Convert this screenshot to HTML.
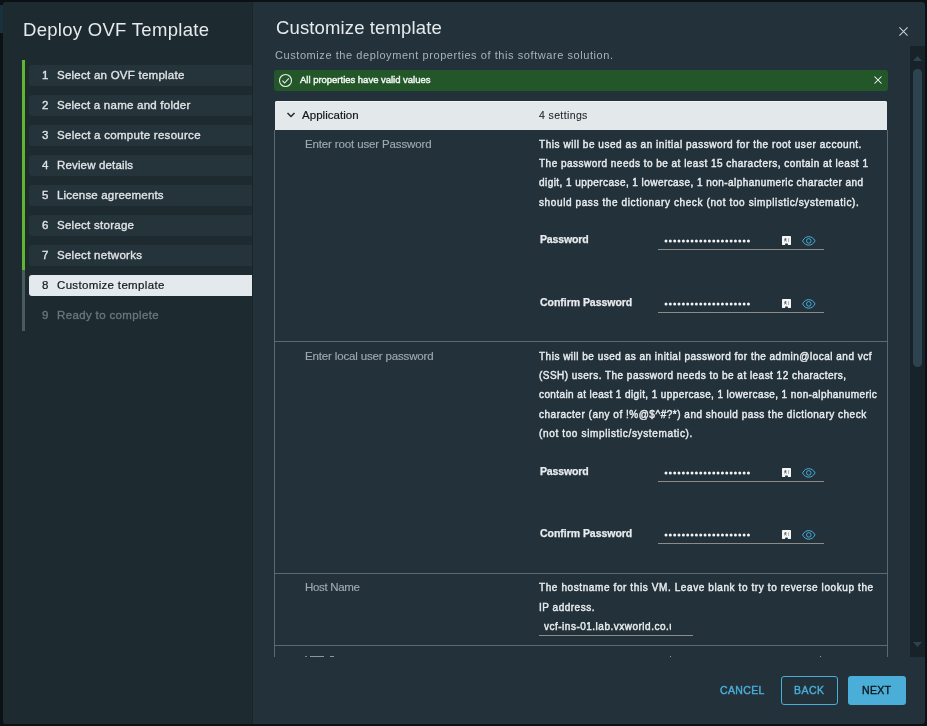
<!DOCTYPE html><html><head><meta charset="utf-8"><style>
html,body{margin:0;padding:0;width:927px;height:726px;overflow:hidden;background:#0b1114;}
.t{position:absolute;white-space:nowrap;line-height:1;font-family:"Liberation Sans", sans-serif;will-change:transform;}
.b{position:absolute;}
</style></head><body>
<div class="b" style="left:0;top:5px;width:3px;height:28px;background:#17323e"></div>
<div class="b" style="left:3px;top:2px;width:922px;height:722px;background:#22313a;border-radius:3px;overflow:hidden">
<div class="b" style="left:0;top:0;width:249px;height:722px;background:#1d2a30"></div><div class="b" style="left:249px;top:0;width:1px;height:722px;background:#1a2429"></div>
</div>
<div class="b" style="left:22px;top:60px;width:3px;height:210px;background:#62b531"></div><div class="b" style="left:22px;top:270px;width:3px;height:61px;background:#4b5960"></div><div class="b" style="left:29px;top:65px;width:223px;height:21px;background:#25333a;border-radius:3px 0 0 3px"></div><div class="b" style="left:29px;top:95px;width:223px;height:21px;background:#25333a;border-radius:3px 0 0 3px"></div><div class="b" style="left:29px;top:125px;width:223px;height:21px;background:#25333a;border-radius:3px 0 0 3px"></div><div class="b" style="left:29px;top:155px;width:223px;height:21px;background:#25333a;border-radius:3px 0 0 3px"></div><div class="b" style="left:29px;top:185px;width:223px;height:21px;background:#25333a;border-radius:3px 0 0 3px"></div><div class="b" style="left:29px;top:215px;width:223px;height:21px;background:#25333a;border-radius:3px 0 0 3px"></div><div class="b" style="left:29px;top:245px;width:223px;height:21px;background:#25333a;border-radius:3px 0 0 3px"></div><div class="b" style="left:29px;top:275px;width:223px;height:21px;background:#e3e9ec;border-radius:3px 0 0 3px"></div><svg class="b" style="left:895px;top:23px" width="17" height="17" viewBox="0 0 17 17"><path d="M4.4 4.4 L12.6 12.6 M12.6 4.4 L4.4 12.6" stroke="#c8d2d6" stroke-width="1.05" fill="none"/></svg><div class="b" style="left:274px;top:70px;width:614px;height:21px;background:#23572a;border-radius:3px"></div><svg class="b" style="left:277px;top:72px" width="17" height="17" viewBox="0 0 17 17"><circle cx="8.5" cy="8.5" r="6" stroke="#e8eee8" stroke-width="1.1" fill="none"/><path d="M5.4 8.7 L7.6 11 L11.8 6.3" stroke="#e8eee8" stroke-width="1.1" fill="none"/></svg><svg class="b" style="left:870px;top:72px" width="16" height="16" viewBox="0 0 16 16"><path d="M4.5 4.5 L11.5 11.5 M11.5 4.5 L4.5 11.5" stroke="#ffffff" stroke-width="1.05" fill="none"/></svg><div class="b" style="left:910px;top:46px;width:15px;height:611px;background:#172329"></div><div class="b" style="left:913px;top:69px;width:9px;height:298px;background:#2d4350;border-radius:5px"></div><svg class="b" style="left:910px;top:50px" width="15" height="15" viewBox="0 0 15 15"><path d="M3 11 L7.5 6 L12 11 Z" fill="#2d4350"/></svg><svg class="b" style="left:910px;top:638px" width="15" height="15" viewBox="0 0 15 15"><path d="M3 4 L7.5 9 L12 4 Z" fill="#2d4350"/></svg><div class="b" style="left:274px;top:101px;width:614px;height:556px;overflow:hidden"><div class="b" style="left:1px;top:0;width:612px;height:29px;background:#e3e8eb;border-radius:2px 2px 0 0;box-shadow:inset 0 1px 0 #eef2f4"></div><div class="b" style="left:0;top:29px;width:1px;height:600px;background:#5a6a72"></div><div class="b" style="left:613px;top:29px;width:1px;height:600px;background:#5a6a72"></div><div class="b" style="left:0;top:240px;width:614px;height:1px;background:#5a6a72"></div><div class="b" style="left:0;top:472px;width:614px;height:1px;background:#5a6a72"></div><div class="b" style="left:0;top:544px;width:614px;height:1px;background:#5a6a72"></div><div class="b" style="left:31px;top:555px;width:2px;height:1px;background:#7d888e"></div><div class="b" style="left:36px;top:555px;width:14px;height:1px;background:#8d989e"></div><div class="b" style="left:56px;top:555px;width:4px;height:1px;background:#8d989e"></div><div class="b" style="left:396px;top:555px;width:1px;height:1px;background:#9aa2a6"></div><div class="b" style="left:546px;top:555px;width:1px;height:1px;background:#9aa2a6"></div></div><svg class="b" style="left:285px;top:109px" width="12" height="12" viewBox="0 0 12 12"><path d="M2.5 4 L6 7.5 L9.5 4" stroke="#1b2a32" stroke-width="1.5" fill="none"/></svg><svg class="b" style="left:663.5px;top:237.5px" width="90" height="6" viewBox="0 0 90 6"><circle cx="2.00" cy="3" r="1.5" fill="#f2f4f5"/><circle cx="6.34" cy="3" r="1.5" fill="#f2f4f5"/><circle cx="10.68" cy="3" r="1.5" fill="#f2f4f5"/><circle cx="15.02" cy="3" r="1.5" fill="#f2f4f5"/><circle cx="19.36" cy="3" r="1.5" fill="#f2f4f5"/><circle cx="23.70" cy="3" r="1.5" fill="#f2f4f5"/><circle cx="28.04" cy="3" r="1.5" fill="#f2f4f5"/><circle cx="32.38" cy="3" r="1.5" fill="#f2f4f5"/><circle cx="36.72" cy="3" r="1.5" fill="#f2f4f5"/><circle cx="41.06" cy="3" r="1.5" fill="#f2f4f5"/><circle cx="45.40" cy="3" r="1.5" fill="#f2f4f5"/><circle cx="49.74" cy="3" r="1.5" fill="#f2f4f5"/><circle cx="54.08" cy="3" r="1.5" fill="#f2f4f5"/><circle cx="58.42" cy="3" r="1.5" fill="#f2f4f5"/><circle cx="62.76" cy="3" r="1.5" fill="#f2f4f5"/><circle cx="67.10" cy="3" r="1.5" fill="#f2f4f5"/><circle cx="71.44" cy="3" r="1.5" fill="#f2f4f5"/><circle cx="75.78" cy="3" r="1.5" fill="#f2f4f5"/><circle cx="80.12" cy="3" r="1.5" fill="#f2f4f5"/><circle cx="84.46" cy="3" r="1.5" fill="#f2f4f5"/></svg><div class="b" style="left:658px;top:249px;width:166px;height:1px;background:#8e8a86"></div><svg class="b" style="left:782px;top:236px" width="9" height="9" viewBox="0 0 9 9"><path d="M0 0.8 Q0 0 0.8 0 H8.2 Q9 0 9 0.8 V8.6 Q9 9 8.6 9 H6 L5.6 7.4 H3.4 L3 9 H0.4 Q0 9 0 8.6 Z" fill="#f6f6f6"/><path d="M2.2 3 L4.6 5.2 M4.6 3 L2.2 5.2 M3.4 2 V4.2" stroke="#5f6a70" stroke-width="1"/><path d="M6.6 2.2 V6" stroke="#a0a8ad" stroke-width="0.9"/></svg><svg class="b" style="left:801.5px;top:235.5px" width="14" height="10" viewBox="0 0 14 10"><path d="M0.6 4.9 C3.2 -0.8, 10.3 -0.8, 13 4.9 C10.3 10.6, 3.2 10.6, 0.6 4.9 Z" stroke="#4aaed9" stroke-width="1" fill="none"/><circle cx="6.8" cy="4.9" r="2.3" stroke="#4aaed9" stroke-width="0.95" fill="none"/></svg><svg class="b" style="left:663.5px;top:300.5px" width="90" height="6" viewBox="0 0 90 6"><circle cx="2.00" cy="3" r="1.5" fill="#f2f4f5"/><circle cx="6.34" cy="3" r="1.5" fill="#f2f4f5"/><circle cx="10.68" cy="3" r="1.5" fill="#f2f4f5"/><circle cx="15.02" cy="3" r="1.5" fill="#f2f4f5"/><circle cx="19.36" cy="3" r="1.5" fill="#f2f4f5"/><circle cx="23.70" cy="3" r="1.5" fill="#f2f4f5"/><circle cx="28.04" cy="3" r="1.5" fill="#f2f4f5"/><circle cx="32.38" cy="3" r="1.5" fill="#f2f4f5"/><circle cx="36.72" cy="3" r="1.5" fill="#f2f4f5"/><circle cx="41.06" cy="3" r="1.5" fill="#f2f4f5"/><circle cx="45.40" cy="3" r="1.5" fill="#f2f4f5"/><circle cx="49.74" cy="3" r="1.5" fill="#f2f4f5"/><circle cx="54.08" cy="3" r="1.5" fill="#f2f4f5"/><circle cx="58.42" cy="3" r="1.5" fill="#f2f4f5"/><circle cx="62.76" cy="3" r="1.5" fill="#f2f4f5"/><circle cx="67.10" cy="3" r="1.5" fill="#f2f4f5"/><circle cx="71.44" cy="3" r="1.5" fill="#f2f4f5"/><circle cx="75.78" cy="3" r="1.5" fill="#f2f4f5"/><circle cx="80.12" cy="3" r="1.5" fill="#f2f4f5"/><circle cx="84.46" cy="3" r="1.5" fill="#f2f4f5"/></svg><div class="b" style="left:658px;top:312px;width:166px;height:1px;background:#8e8a86"></div><svg class="b" style="left:782px;top:299px" width="9" height="9" viewBox="0 0 9 9"><path d="M0 0.8 Q0 0 0.8 0 H8.2 Q9 0 9 0.8 V8.6 Q9 9 8.6 9 H6 L5.6 7.4 H3.4 L3 9 H0.4 Q0 9 0 8.6 Z" fill="#f6f6f6"/><path d="M2.2 3 L4.6 5.2 M4.6 3 L2.2 5.2 M3.4 2 V4.2" stroke="#5f6a70" stroke-width="1"/><path d="M6.6 2.2 V6" stroke="#a0a8ad" stroke-width="0.9"/></svg><svg class="b" style="left:801.5px;top:298.5px" width="14" height="10" viewBox="0 0 14 10"><path d="M0.6 4.9 C3.2 -0.8, 10.3 -0.8, 13 4.9 C10.3 10.6, 3.2 10.6, 0.6 4.9 Z" stroke="#4aaed9" stroke-width="1" fill="none"/><circle cx="6.8" cy="4.9" r="2.3" stroke="#4aaed9" stroke-width="0.95" fill="none"/></svg><svg class="b" style="left:663.5px;top:469.5px" width="90" height="6" viewBox="0 0 90 6"><circle cx="2.00" cy="3" r="1.5" fill="#f2f4f5"/><circle cx="6.34" cy="3" r="1.5" fill="#f2f4f5"/><circle cx="10.68" cy="3" r="1.5" fill="#f2f4f5"/><circle cx="15.02" cy="3" r="1.5" fill="#f2f4f5"/><circle cx="19.36" cy="3" r="1.5" fill="#f2f4f5"/><circle cx="23.70" cy="3" r="1.5" fill="#f2f4f5"/><circle cx="28.04" cy="3" r="1.5" fill="#f2f4f5"/><circle cx="32.38" cy="3" r="1.5" fill="#f2f4f5"/><circle cx="36.72" cy="3" r="1.5" fill="#f2f4f5"/><circle cx="41.06" cy="3" r="1.5" fill="#f2f4f5"/><circle cx="45.40" cy="3" r="1.5" fill="#f2f4f5"/><circle cx="49.74" cy="3" r="1.5" fill="#f2f4f5"/><circle cx="54.08" cy="3" r="1.5" fill="#f2f4f5"/><circle cx="58.42" cy="3" r="1.5" fill="#f2f4f5"/><circle cx="62.76" cy="3" r="1.5" fill="#f2f4f5"/><circle cx="67.10" cy="3" r="1.5" fill="#f2f4f5"/><circle cx="71.44" cy="3" r="1.5" fill="#f2f4f5"/><circle cx="75.78" cy="3" r="1.5" fill="#f2f4f5"/><circle cx="80.12" cy="3" r="1.5" fill="#f2f4f5"/><circle cx="84.46" cy="3" r="1.5" fill="#f2f4f5"/></svg><div class="b" style="left:658px;top:481px;width:166px;height:1px;background:#8e8a86"></div><svg class="b" style="left:782px;top:468px" width="9" height="9" viewBox="0 0 9 9"><path d="M0 0.8 Q0 0 0.8 0 H8.2 Q9 0 9 0.8 V8.6 Q9 9 8.6 9 H6 L5.6 7.4 H3.4 L3 9 H0.4 Q0 9 0 8.6 Z" fill="#f6f6f6"/><path d="M2.2 3 L4.6 5.2 M4.6 3 L2.2 5.2 M3.4 2 V4.2" stroke="#5f6a70" stroke-width="1"/><path d="M6.6 2.2 V6" stroke="#a0a8ad" stroke-width="0.9"/></svg><svg class="b" style="left:801.5px;top:467.5px" width="14" height="10" viewBox="0 0 14 10"><path d="M0.6 4.9 C3.2 -0.8, 10.3 -0.8, 13 4.9 C10.3 10.6, 3.2 10.6, 0.6 4.9 Z" stroke="#4aaed9" stroke-width="1" fill="none"/><circle cx="6.8" cy="4.9" r="2.3" stroke="#4aaed9" stroke-width="0.95" fill="none"/></svg><svg class="b" style="left:663.5px;top:531.5px" width="90" height="6" viewBox="0 0 90 6"><circle cx="2.00" cy="3" r="1.5" fill="#f2f4f5"/><circle cx="6.34" cy="3" r="1.5" fill="#f2f4f5"/><circle cx="10.68" cy="3" r="1.5" fill="#f2f4f5"/><circle cx="15.02" cy="3" r="1.5" fill="#f2f4f5"/><circle cx="19.36" cy="3" r="1.5" fill="#f2f4f5"/><circle cx="23.70" cy="3" r="1.5" fill="#f2f4f5"/><circle cx="28.04" cy="3" r="1.5" fill="#f2f4f5"/><circle cx="32.38" cy="3" r="1.5" fill="#f2f4f5"/><circle cx="36.72" cy="3" r="1.5" fill="#f2f4f5"/><circle cx="41.06" cy="3" r="1.5" fill="#f2f4f5"/><circle cx="45.40" cy="3" r="1.5" fill="#f2f4f5"/><circle cx="49.74" cy="3" r="1.5" fill="#f2f4f5"/><circle cx="54.08" cy="3" r="1.5" fill="#f2f4f5"/><circle cx="58.42" cy="3" r="1.5" fill="#f2f4f5"/><circle cx="62.76" cy="3" r="1.5" fill="#f2f4f5"/><circle cx="67.10" cy="3" r="1.5" fill="#f2f4f5"/><circle cx="71.44" cy="3" r="1.5" fill="#f2f4f5"/><circle cx="75.78" cy="3" r="1.5" fill="#f2f4f5"/><circle cx="80.12" cy="3" r="1.5" fill="#f2f4f5"/><circle cx="84.46" cy="3" r="1.5" fill="#f2f4f5"/></svg><div class="b" style="left:658px;top:543px;width:166px;height:1px;background:#8e8a86"></div><svg class="b" style="left:782px;top:530px" width="9" height="9" viewBox="0 0 9 9"><path d="M0 0.8 Q0 0 0.8 0 H8.2 Q9 0 9 0.8 V8.6 Q9 9 8.6 9 H6 L5.6 7.4 H3.4 L3 9 H0.4 Q0 9 0 8.6 Z" fill="#f6f6f6"/><path d="M2.2 3 L4.6 5.2 M4.6 3 L2.2 5.2 M3.4 2 V4.2" stroke="#5f6a70" stroke-width="1"/><path d="M6.6 2.2 V6" stroke="#a0a8ad" stroke-width="0.9"/></svg><svg class="b" style="left:801.5px;top:529.5px" width="14" height="10" viewBox="0 0 14 10"><path d="M0.6 4.9 C3.2 -0.8, 10.3 -0.8, 13 4.9 C10.3 10.6, 3.2 10.6, 0.6 4.9 Z" stroke="#4aaed9" stroke-width="1" fill="none"/><circle cx="6.8" cy="4.9" r="2.3" stroke="#4aaed9" stroke-width="0.95" fill="none"/></svg><div class="b" style="left:539px;top:635px;width:154px;height:1px;background:#8e8a86"></div><div class="b" style="left:781px;top:676px;width:55px;height:27px;border:1px solid #4aaed9;border-radius:3px"></div><div class="b" style="left:848px;top:676px;width:58px;height:29px;background:#4aaed9;border-radius:3px"></div><div class="t" style="left:22.80px;top:21.00px;font-size:18.5px;color:#e6eaec;font-weight:normal;letter-spacing:0.296px;">Deploy OVF Template</div>
<div class="t" style="left:276.00px;top:19.00px;font-size:18.5px;color:#e6eaec;font-weight:normal;letter-spacing:0.130px;">Customize template</div>
<div class="t" style="left:275.00px;top:50.00px;font-size:11px;color:#a8b3b9;font-weight:normal;letter-spacing:0.570px;">Customize the deployment properties of this software solution.</div>
<div class="t" style="left:299.93px;top:75.00px;font-size:9.5px;color:#f0f4f0;font-weight:normal;letter-spacing:-0.015px;-webkit-text-stroke:0.45px #f0f4f0;">All properties have valid values</div>
<div class="t" style="left:42.38px;top:70.00px;font-size:11.5px;color:#dfe4e7;font-weight:normal;letter-spacing:0.000px;-webkit-text-stroke:0.35px #dfe4e7;">1</div>
<div class="t" style="left:57.07px;top:70.00px;font-size:11.5px;color:#dfe4e7;font-weight:normal;letter-spacing:0.250px;-webkit-text-stroke:0.35px #dfe4e7;">Select an OVF template</div>
<div class="t" style="left:42.38px;top:100.00px;font-size:11.5px;color:#dfe4e7;font-weight:normal;letter-spacing:0.000px;-webkit-text-stroke:0.35px #dfe4e7;">2</div>
<div class="t" style="left:57.07px;top:100.00px;font-size:11.5px;color:#dfe4e7;font-weight:normal;letter-spacing:0.236px;-webkit-text-stroke:0.35px #dfe4e7;">Select a name and folder</div>
<div class="t" style="left:42.38px;top:130.00px;font-size:11.5px;color:#dfe4e7;font-weight:normal;letter-spacing:0.000px;-webkit-text-stroke:0.35px #dfe4e7;">3</div>
<div class="t" style="left:57.07px;top:130.00px;font-size:11.5px;color:#dfe4e7;font-weight:normal;letter-spacing:0.281px;-webkit-text-stroke:0.35px #dfe4e7;">Select a compute resource</div>
<div class="t" style="left:42.38px;top:160.00px;font-size:11.5px;color:#dfe4e7;font-weight:normal;letter-spacing:0.000px;-webkit-text-stroke:0.35px #dfe4e7;">4</div>
<div class="t" style="left:57.07px;top:160.00px;font-size:11.5px;color:#dfe4e7;font-weight:normal;letter-spacing:0.150px;-webkit-text-stroke:0.35px #dfe4e7;">Review details</div>
<div class="t" style="left:42.38px;top:190.00px;font-size:11.5px;color:#dfe4e7;font-weight:normal;letter-spacing:0.000px;-webkit-text-stroke:0.35px #dfe4e7;">5</div>
<div class="t" style="left:57.07px;top:190.00px;font-size:11.5px;color:#dfe4e7;font-weight:normal;letter-spacing:0.179px;-webkit-text-stroke:0.35px #dfe4e7;">License agreements</div>
<div class="t" style="left:42.38px;top:220.00px;font-size:11.5px;color:#dfe4e7;font-weight:normal;letter-spacing:0.000px;-webkit-text-stroke:0.35px #dfe4e7;">6</div>
<div class="t" style="left:57.07px;top:220.00px;font-size:11.5px;color:#dfe4e7;font-weight:normal;letter-spacing:0.264px;-webkit-text-stroke:0.35px #dfe4e7;">Select storage</div>
<div class="t" style="left:42.38px;top:250.00px;font-size:11.5px;color:#dfe4e7;font-weight:normal;letter-spacing:0.000px;-webkit-text-stroke:0.35px #dfe4e7;">7</div>
<div class="t" style="left:57.07px;top:250.00px;font-size:11.5px;color:#dfe4e7;font-weight:normal;letter-spacing:0.273px;-webkit-text-stroke:0.35px #dfe4e7;">Select networks</div>
<div class="t" style="left:42.30px;top:280.00px;font-size:11.5px;color:#10181c;font-weight:normal;letter-spacing:0.000px;-webkit-text-stroke:0.2px #10181c;">8</div>
<div class="t" style="left:57.00px;top:280.00px;font-size:11.5px;color:#10181c;font-weight:normal;letter-spacing:0.334px;-webkit-text-stroke:0.2px #10181c;">Customize template</div>
<div class="t" style="left:42.38px;top:310.00px;font-size:11.5px;color:#69767d;font-weight:normal;letter-spacing:0.000px;-webkit-text-stroke:0.35px #69767d;">9</div>
<div class="t" style="left:57.07px;top:310.00px;font-size:11.5px;color:#69767d;font-weight:normal;letter-spacing:0.360px;-webkit-text-stroke:0.35px #69767d;">Ready to complete</div>
<div class="t" style="left:302.00px;top:110.00px;font-size:11.5px;color:#11191d;font-weight:normal;letter-spacing:0.044px;-webkit-text-stroke:0.2px #11191d;">Application</div>
<div class="t" style="left:539.05px;top:110.00px;font-size:10.5px;color:#1a252b;font-weight:normal;letter-spacing:0.379px;-webkit-text-stroke:0.1px #1a252b;">4 settings</div>
<div class="t" style="left:304.97px;top:139.00px;font-size:11.5px;color:#9ea9af;font-weight:normal;letter-spacing:-0.139px;-webkit-text-stroke:0.15px #9ea9af;">Enter root user Password</div>
<div class="t" style="left:304.97px;top:351.00px;font-size:11.5px;color:#9ea9af;font-weight:normal;letter-spacing:-0.153px;-webkit-text-stroke:0.15px #9ea9af;">Enter local user password</div>
<div class="t" style="left:304.77px;top:582.00px;font-size:11.5px;color:#9ea9af;font-weight:normal;letter-spacing:-0.334px;-webkit-text-stroke:0.15px #9ea9af;">Host Name</div>
<div class="t" style="left:539.11px;top:140.00px;font-size:10px;color:#e8ecee;font-weight:normal;letter-spacing:0.547px;-webkit-text-stroke:0.42px #e8ecee;">This will be used as an initial password for the root user account.</div>
<div class="t" style="left:539.11px;top:159.00px;font-size:10px;color:#e8ecee;font-weight:normal;letter-spacing:0.478px;-webkit-text-stroke:0.42px #e8ecee;">The password needs to be at least 15 characters, contain at least 1</div>
<div class="t" style="left:539.11px;top:178.00px;font-size:10px;color:#e8ecee;font-weight:normal;letter-spacing:0.442px;-webkit-text-stroke:0.42px #e8ecee;">digit, 1 uppercase, 1 lowercase, 1 non-alphanumeric character and</div>
<div class="t" style="left:539.11px;top:198.00px;font-size:10px;color:#e8ecee;font-weight:normal;letter-spacing:0.611px;-webkit-text-stroke:0.42px #e8ecee;">should pass the dictionary check (not too simplistic/systematic).</div>
<div class="t" style="left:539.11px;top:352.00px;font-size:10px;color:#e8ecee;font-weight:normal;letter-spacing:0.497px;-webkit-text-stroke:0.42px #e8ecee;">This will be used as an initial password for the admin@local and vcf</div>
<div class="t" style="left:539.11px;top:371.00px;font-size:10px;color:#e8ecee;font-weight:normal;letter-spacing:0.471px;-webkit-text-stroke:0.42px #e8ecee;">(SSH) users. The password needs to be at least 12 characters,</div>
<div class="t" style="left:539.11px;top:390.00px;font-size:10px;color:#e8ecee;font-weight:normal;letter-spacing:0.400px;-webkit-text-stroke:0.42px #e8ecee;">contain at least 1 digit, 1 uppercase, 1 lowercase, 1 non-alphanumeric</div>
<div class="t" style="left:539.11px;top:410.00px;font-size:10px;color:#e8ecee;font-weight:normal;letter-spacing:0.511px;-webkit-text-stroke:0.42px #e8ecee;">character (any of !%@$^#?*) and should pass the dictionary check</div>
<div class="t" style="left:539.11px;top:429.00px;font-size:10px;color:#e8ecee;font-weight:normal;letter-spacing:0.645px;-webkit-text-stroke:0.42px #e8ecee;">(not too simplistic/systematic).</div>
<div class="t" style="left:539.11px;top:583.00px;font-size:10px;color:#e8ecee;font-weight:normal;letter-spacing:0.600px;-webkit-text-stroke:0.42px #e8ecee;">The hostname for this VM. Leave blank to try to reverse lookup the</div>
<div class="t" style="left:539.11px;top:603.00px;font-size:10px;color:#e8ecee;font-weight:normal;letter-spacing:0.508px;-webkit-text-stroke:0.42px #e8ecee;">IP address.</div>
<div class="t" style="left:539.52px;top:234.00px;font-size:10.5px;color:#e8ecee;font-weight:bold;letter-spacing:-0.134px;-webkit-text-stroke:0.25px #e8ecee;">Password</div>
<div class="t" style="left:539.52px;top:466.00px;font-size:10.5px;color:#e8ecee;font-weight:bold;letter-spacing:-0.134px;-webkit-text-stroke:0.25px #e8ecee;">Password</div>
<div class="t" style="left:539.52px;top:297.00px;font-size:10.5px;color:#e8ecee;font-weight:bold;letter-spacing:-0.034px;-webkit-text-stroke:0.25px #e8ecee;">Confirm Password</div>
<div class="t" style="left:539.52px;top:528.00px;font-size:10.5px;color:#e8ecee;font-weight:bold;letter-spacing:-0.034px;-webkit-text-stroke:0.25px #e8ecee;">Confirm Password</div>
<div class="t" style="left:544.21px;top:622.00px;font-size:10px;color:#e8ecee;font-weight:normal;letter-spacing:0.500px;-webkit-text-stroke:0.42px #e8ecee;width:126.79px;overflow:hidden;">vcf-ins-01.lab.vxworld.co.uk</div>
<div class="t" style="left:719.70px;top:685.00px;font-size:10.5px;color:#4aaed9;font-weight:normal;letter-spacing:0.369px;-webkit-text-stroke:0.4px #4aaed9;">CANCEL</div>
<div class="t" style="left:794.40px;top:685.00px;font-size:10.5px;color:#4aaed9;font-weight:normal;letter-spacing:0.470px;-webkit-text-stroke:0.4px #4aaed9;">BACK</div>
<div class="t" style="left:861.57px;top:685.00px;font-size:10.5px;color:#0e1418;font-weight:normal;letter-spacing:0.320px;-webkit-text-stroke:0.35px #0e1418;">NEXT</div>
</body></html>
